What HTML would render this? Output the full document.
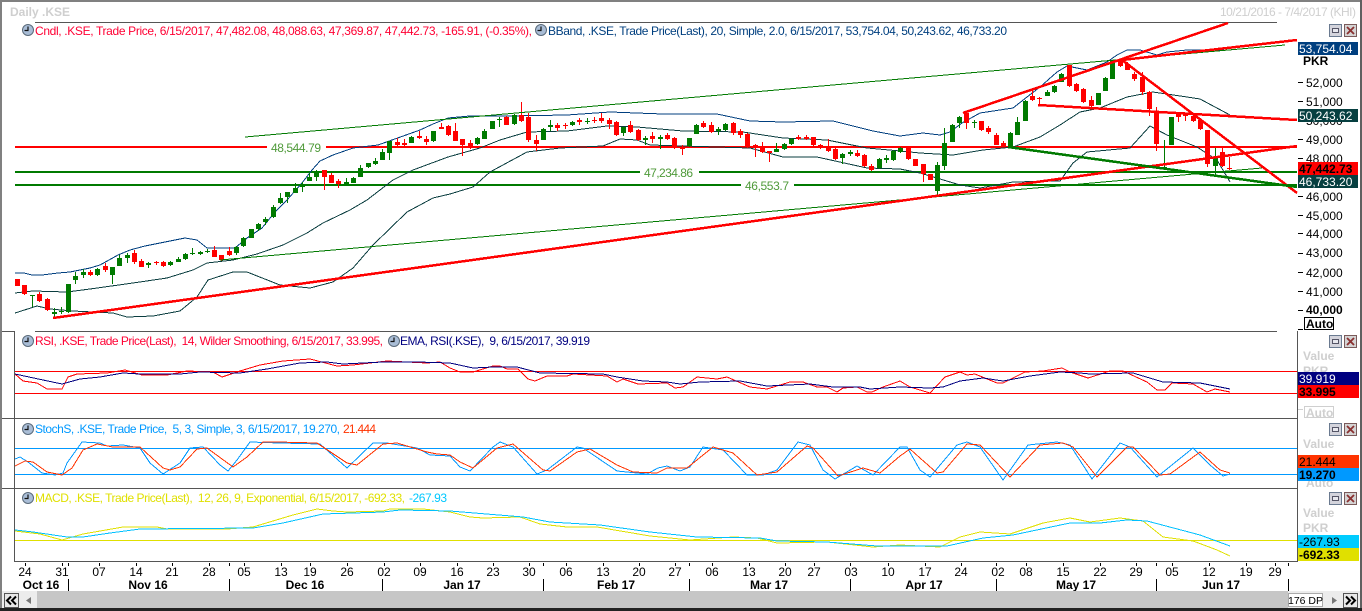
<!DOCTYPE html>
<html><head><meta charset="utf-8"><style>
html,body{margin:0;padding:0;background:#fff;width:1362px;height:611px;overflow:hidden}
svg{display:block;font-family:"Liberation Sans",sans-serif;font-size:12px}
.l{fill:none;stroke-width:1;shape-rendering:crispEdges}
.t{fill:none;shape-rendering:crispEdges}
.ax text{text-anchor:middle;fill:#000}
.mo text{text-anchor:middle;font-weight:bold;fill:#000}
.px text{fill:#000}
.gr{fill:#cfcfcf;font-weight:bold}
</style></head><body>
<svg width="1362" height="611" viewBox="0 0 1362 611" xmlns="http://www.w3.org/2000/svg">
<defs>
<g id="clk"><circle cx="6" cy="6" r="5.5" fill="#a9bdd6" stroke="#5a6a7a"/><path d="M6 2.500V6.500H2.500" fill="none" stroke="#111" stroke-width="1.200"/></g>
<g id="btn"><rect x=".5" y=".5" width="12" height="12" fill="#d4d4dc" stroke="#6a7a90"/><rect x="3.500" y="4.500" width="6" height="4" fill="#e8e8ee" stroke="#556"/>
<rect x="15.500" y=".5" width="12" height="12" fill="#d4d4d4" stroke="#7a5a5a"/><path d="M18 3L25 10M25 3L18 10" stroke="#8a3030" stroke-width="1.800"/></g>
</defs>
<rect width="1362" height="611" fill="#fff"/>
<!-- window frame -->
<rect x="0" y="0" width="1362" height="2" fill="#808080"/>
<rect x="0" y="0" width="2" height="611" fill="#808080"/>
<rect x="1360" y="0" width="2" height="611" fill="#606060"/>
<rect x="0" y="608" width="1362" height="3" fill="#222"/>

<text x="10" y="16" class="gr" font-size="12">Daily .KSE</text>
<text x="1220" y="16" fill="#cfcfcf" textLength="136">10/21/2016 - 7/4/2017 (KHI)</text>

<!-- pane lines -->
<g fill="#555">
<rect x="35" y="22" width="1242" height="1"/>
<rect x="35" y="331" width="1242" height="1"/>
<rect x="2" y="331" width="13" height="1"/>
<rect x="14" y="331" width="1" height="230"/>
<rect x="1297" y="331" width="1" height="230"/>
<rect x="2" y="418" width="1296" height="1"/>
<rect x="2" y="488" width="1296" height="1"/>
<rect x="14" y="561" width="1284" height="1"/>
</g>

<!-- horizontal levels -->
<g class="t" stroke-width="2">
<path stroke="#f00" d="M15 147H267M326 147H1297"/>
<path stroke="#007a00" d="M15 172H640M699 172H1297M15 185H741M794 185H1297"/>
</g>
<g fill="#4f9a3a">
<text x="271" y="152" textLength="50">48,544.79</text>
<text x="644" y="177" textLength="49">47,234.86</text>
<text x="745" y="190" textLength="44">46,553.7</text>
</g>

<!-- Bollinger -->
<polyline class="l" stroke="#003f7f" points="15,273 24,273 32,275 42,275 58,273 70,272 90,268 100,265 118,255 130,250 145,246 165,242 185,238 197,240 207,248 235,248 247,238 262,228 275,212 287,200 302,183 312,170 320,161 333,155 353,148 378,145 392,140 420,130 433,124 448,118 470,116 510,116 567,115 610,112 663,114 717,114 750,121 783,122 833,121 873,131 900,136 923,133 940,135 950,132 962,123 980,113 1013,108 1027,97 1040,87 1057,72 1067,66 1087,70 1107,62 1117,55 1127,50 1140,50 1157,55 1167,52 1187,50 1220,50 1230,48"/>
<polyline class="l" stroke="#0a3d3f" points="15,293 33,291 67,292 90,289 133,283 167,278 193,270 207,263 233,260 257,254 283,245 307,233 323,223 350,210 367,200 393,180 413,170 448,157 480,148 500,140 527,132 567,131 607,126 637,127 683,131 743,132 783,138 827,140 867,148 900,151 920,153 953,155 983,150 1013,147 1040,137 1060,125 1080,112 1100,108 1127,97 1153,92 1187,97 1200,99 1230,115"/>
<polyline class="l" stroke="#0a3d3f" points="15,313 37,306 50,309 73,311 113,313 127,317 153,316 180,311 197,297 208,280 233,272 247,272 280,285 310,288 333,282 353,268 373,245 407,212 433,198 450,194 473,187 490,172 527,152 560,148 603,146 620,139 637,140 650,145 750,148 783,157 817,157 867,168 900,169 920,173 960,185 980,188 1013,182 1060,181 1073,163 1087,152 1130,148 1150,126 1167,135 1197,147 1217,160 1230,182"/>

<!-- candles -->
<g transform="translate(.5,0)" class="t">
<path stroke="#f00" stroke-width="1" d="M24 285V295M39 292V302M47 298V311M90 270V276M105 263V272M134 250V264M141 259V267M156 261V265M163 261V267M214 246V257M221 255V261M229 247V256M324 170V190M331 173V183M338 179V188M397 138V146M404 139V146M419 131V139M426 136V145M441 123V129M448 125V136M455 123V132M462 139V156M470 140V149M506 116V125M521 102V122M528 113V142M536 135V151M557 123V131M565 123V129M579 118V125M594 117V123M601 113V123M609 118V129M616 121V136M630 121V133M638 129V141M652 132V143M667 133V140M674 137V149M682 145V155M703 121V128M711 122V133M733 122V135M740 129V138M747 133V148M755 144V157M762 142V153M769 151V162M798 135V140M806 135V140M813 137V146M820 144V149M828 139V152M835 148V160M857 150V157M864 154V167M871 164V171M908 148V160M915 159V166M923 164V182M930 174V180M966 113V129M981 121V131M988 126V134M996 133V145M1003 141V147M1032 90V101M1039 97V105M1069 65V87M1076 83V92M1083 88V103M1091 96V108M1120 59V67M1127 62V70M1134 72V81M1142 72V95M1149 91V116M1156 107V151M1178 113V122M1185 113V121M1193 114V122M1200 118V130M1207 130V167M1222 147V167M1229 157V170"/>
<path stroke="#007a00" stroke-width="1" d="M32 295V307M54 308V317M61 307V314M68 284V313M75 272V284M83 269V278M97 268V276M112 267V284M119 255V266M127 253V263M148 262V268M170 261V266M178 257V262M185 253V260M192 248V255M200 251V255M207 249V253M236 246V255M243 237V247M258 223V231M265 217V225M273 205V218M280 193V204M287 192V203M295 183V193M302 182V192M309 173V181M316 170V181M346 178V185M353 177V183M360 165V177M368 163V168M375 158V165M382 149V160M389 141V160M411 136V143M433 131V142M477 137V145M484 129V139M499 117V127M514 114V125M543 128V140M550 120V131M572 121V126M587 118V124M623 127V136M645 136V145M660 135V149M689 138V147M696 124V134M718 127V135M725 123V131M776 143V152M784 143V150M791 138V145M842 153V164M850 150V156M879 158V169M886 155V163M893 150V161M900 147V153M937 162V197M944 128V170M952 124V142M959 116V128M974 120V128M1010 132V147M1017 117V135M1025 100V121M1047 90V96M1054 85V93M1061 73V82M1098 93V105M1105 77V91M1112 60V79M1164 140V168M1171 117V145M1215 148V175"/>
<path stroke="#f00" stroke-width="5" d="M17 279V286M24 285V294M39 294V301M47 299V310M90 272V275M105 266V270M134 253V262M141 261V267M156 262V263M163 262V266M214 250V257M221 255V260M229 251V255M324 170V177M331 175V183M338 181V184M397 142V145M404 143V145M419 136V138M426 139V142M441 127V129M448 126V135M455 131V141M462 139V145M470 143V148M506 117V125M521 115V121M528 117V140M536 140V144M557 125V128M565 125V126M579 120V122M594 120V121M601 118V121M609 120V124M616 122V135M630 125V132M638 130V140M652 136V139M667 135V139M674 138V148M682 148V149M703 123V127M711 125V132M733 123V133M740 131V135M747 134V147M755 145V147M762 146V152M769 151V153M798 137V139M806 137V139M813 137V145M820 145V147M828 147V151M835 149V159M857 153V156M864 155V166M871 166V170M908 148V159M915 159V166M923 164V174M930 174V180M966 113V123M981 121V130M988 128V132M996 135V145M1003 143V147M1032 96V100M1039 98V99M1069 65V86M1076 84V91M1083 89V102M1091 100V106M1120 60V66M1127 64V70M1134 74V79M1142 77V92M1149 92V109M1156 111V144M1178 113V117M1185 114V116M1193 116V121M1200 120V129M1207 130V164M1222 152V166M1229 168V169"/>
<path stroke="#007a00" stroke-width="5" d="M32 295V296M54 312V314M61 311V312M68 284V312M75 276V280M83 272V275M97 269V275M112 267V275M119 258V266M127 255V258M148 263V265M170 262V265M178 259V262M185 254V259M192 253V254M200 252V254M207 251V252M236 247V253M243 238V246M251 229V238M258 224V229M265 219V222M273 207V217M280 198V203M287 192V197M295 188V193M302 184V187M309 177V181M316 172V177M346 182V185M353 178V183M360 168V177M368 163V167M375 161V164M382 152V160M389 141V153M411 137V143M433 131V141M477 138V144M484 131V139M492 121V129M499 119V120M514 115V124M543 129V140M550 125V127M572 122V125M587 121V122M623 127V133M645 138V140M660 137V139M689 138V146M696 125V134M718 129V131M725 124V130M776 149V152M784 144V149M791 139V144M842 154V158M850 152V154M879 159V168M886 158V160M893 151V160M900 148V152M937 165V191M944 143V166M952 125V142M959 117V123M974 122V123M1010 133V147M1017 122V135M1025 101V121M1047 92V96M1054 86V92M1061 74V82M1098 93V105M1105 78V91M1112 61V79M1164 167V168M1171 117V145M1215 158V166"/>
</g>

<!-- trend lines -->
<g class="t">
<path stroke="#007a00" stroke-width="1" d="M245 137L1285 45"/>
<path stroke="#007a00" stroke-width="1" d="M220 260L1262 168"/>
<path stroke="#f00" stroke-width="2.500" d="M53 318L1297 146"/>
<path stroke="#f00" stroke-width="2.500" d="M963 113L1228 23"/>
<path stroke="#f00" stroke-width="2.500" d="M1122 60L1297 40"/>
<path stroke="#f00" stroke-width="2.500" d="M1122 60L1297 193"/>
<path stroke="#f00" stroke-width="2.500" d="M1038 105L1297 120"/>
<path stroke="#007a00" stroke-width="2.500" d="M1008 147L1297 187"/>
</g>

<!-- RSI -->
<rect x="15" y="371" width="1282" height="1" fill="#f00"/>
<rect x="15" y="393" width="1282" height="1" fill="#f00"/>
<polyline class="l" stroke="#f00" points="15,374 23,381 37,383 47,389 62,389 68,377 77,374 107,373 125,370 142,375 167,375 187,371 213,372 222,377 240,371 260,365 283,361 310,359 337,366 353,365 387,361 427,363 440,362 450,368 460,372 473,372 483,369 493,366 500,366 507,369 518,369 528,379 535,381 547,376 567,376 573,374 607,376 617,382 623,379 638,384 667,383 675,388 683,387 697,377 717,379 727,377 750,387 767,389 790,382 803,382 817,387 827,387 837,392 843,388 857,387 867,392 872,392 883,387 900,381 910,387 930,393 945,377 960,372 967,375 975,374 997,383 1003,383 1025,372 1043,371 1062,368 1070,372 1088,378 1110,371 1123,371 1147,382 1157,390 1165,390 1172,383 1193,384 1207,392 1215,389 1230,392"/>
<polyline class="l" stroke="#000080" stroke-width="1.500" points="15,374 43,380 62,384 80,379 100,377 123,373 140,374 180,374 200,372 240,373 267,369 300,363 327,362 343,364 383,362 417,362 450,363 473,368 493,367 517,367 540,373 603,374 617,377 643,381 667,382 680,384 700,382 740,381 767,386 810,384 833,387 860,387 870,389 900,387 930,388 943,387 960,381 983,378 1003,381 1030,376 1060,372 1080,373 1090,374 1133,373 1163,382 1200,383 1230,389"/>

<!-- Stoch -->
<rect x="15" y="448" width="1282" height="1" fill="#0099ff"/>
<rect x="15" y="474" width="1282" height="1" fill="#0099ff"/>
<polyline class="l" stroke="#0099ff" points="15,459 20,457 28,462 42,473 55,475 63,473 67,463 82,442 100,443 107,446 123,445 140,448 150,463 163,474 180,463 190,448 203,447 220,465 228,471 237,460 250,442 280,443 320,444 347,468 373,443 387,443 417,448 430,455 450,456 460,467 470,471 493,447 500,442 513,447 537,474 547,470 577,447 583,448 617,471 647,474 658,468 667,466 680,471 690,467 703,447 723,450 747,475 763,475 777,470 798,442 810,445 823,470 835,479 857,466 873,475 900,447 907,447 920,470 930,477 957,445 967,442 980,447 1003,480 1028,445 1057,442 1070,445 1092,479 1120,443 1130,447 1157,477 1193,448 1210,465 1223,476 1230,474"/>
<polyline class="l" stroke="#ff3300" points="15,466 25,461 33,462 47,472 62,475 72,468 83,450 97,444 113,447 140,447 163,468 170,470 180,467 197,449 207,448 233,467 247,457 263,442 277,442 317,443 347,463 357,465 383,444 397,443 427,452 437,454 450,455 460,462 473,468 497,448 513,444 543,470 550,471 577,452 590,449 617,465 633,472 657,473 667,468 687,468 713,447 733,453 757,475 777,472 807,446 813,448 838,476 863,468 880,473 900,456 910,449 920,458 937,473 943,472 967,444 980,445 1010,477 1040,445 1063,443 1073,447 1097,477 1127,447 1133,447 1160,475 1170,474 1200,452 1220,470 1230,473"/>

<!-- MACD -->
<rect x="15" y="540" width="1282" height="1" fill="#e0e000"/>
<polyline class="l" stroke="#e0e000" points="15,531 40,534 62,540 83,534 123,527 157,527 167,529 227,529 253,527 293,515 317,509 333,511 347,512 383,511 390,509 423,509 450,512 470,517 483,518 520,517 540,524 567,527 597,527 650,536 690,540 733,537 757,538 777,543 827,542 873,547 900,545 940,547 960,537 980,532 1010,534 1043,523 1070,518 1090,522 1120,518 1143,521 1163,537 1193,541 1217,550 1230,556"/>
<polyline class="l" stroke="#00c0ff" points="15,530 33,532 67,537 83,537 110,533 140,529 253,528 283,523 323,514 383,512 400,510 450,511 523,517 550,522 600,525 650,532 697,537 760,538 777,541 827,542 877,546 947,546 983,538 1013,535 1070,523 1100,523 1127,520 1147,521 1200,535 1230,546"/>

<!-- legends -->
<use href="#clk" x="22" y="24"/>
<text x="35" y="35" fill="#ff0033" textLength="497">Cndl, .KSE, Trade Price, 6/15/2017, 47,482.08, 48,088.63, 47,369.87, 47,442.73, -165.91, (-0.35%),</text>
<use href="#clk" x="535" y="24"/>
<text x="548" y="35" fill="#003f7f" textLength="459">BBand, .KSE, Trade Price(Last), 20, Simple, 2.0, 6/15/2017, 53,754.04, 50,243.62, 46,733.20</text>
<use href="#clk" x="22" y="335"/>
<text x="35" y="345" fill="#ff0033" textLength="348" xml:space="preserve">RSI, .KSE, Trade Price(Last),  14, Wilder Smoothing, 6/15/2017, 33.995,</text>
<use href="#clk" x="388" y="335"/>
<text x="400" y="345" fill="#000080" textLength="190" xml:space="preserve">EMA, RSI(.KSE),  9, 6/15/2017, 39.919</text>
<use href="#clk" x="22" y="423"/>
<text x="35" y="433" fill="#0099ff" textLength="305" xml:space="preserve">StochS, .KSE, Trade Price,  5, 3, Simple, 3, 6/15/2017, 19.270,</text>
<text x="343" y="433" fill="#ff3300" textLength="33">21.444</text>
<use href="#clk" x="22" y="492"/>
<text x="35" y="502" fill="#e0e000" textLength="370" xml:space="preserve">MACD, .KSE, Trade Price(Last),  12, 26, 9, Exponential, 6/15/2017, -692.33,</text>
<text x="409" y="502" fill="#00c8ff" textLength="38">-267.93</text>

<!-- right axis -->
<use href="#btn" x="1329" y="24"/>
<use href="#btn" x="1329" y="335"/>
<use href="#btn" x="1329" y="423"/>
<use href="#btn" x="1329" y="492"/>

<g class="px">
<path stroke="#000" d="M1298 82.500H1303M1298 101.500H1303M1298 139.500H1303M1298 158.500H1303M1298 196.500H1303M1298 215.500H1303M1298 233.500H1303M1298 253.500H1303M1298 272.500H1303M1298 291.500H1303M1298 310.500H1303M1298 329.500H1303"/>
<text x="1306" y="87">52,000</text><text x="1306" y="106">51,000</text><text x="1306" y="125">50,000</text>
<text x="1306" y="144">49,000</text><text x="1306" y="163">48,000</text><text x="1306" y="201">46,000</text>
<text x="1306" y="220">45,000</text><text x="1306" y="238">44,000</text><text x="1306" y="257">43,000</text>
<text x="1306" y="277">42,000</text><text x="1306" y="296">41,000</text>
<text x="1306" y="314" font-weight="bold">40,000</text>
<text x="1303" y="65" font-weight="bold" fill="#000">PKR</text>
</g>
<rect x="1304.500" y="317.500" width="29" height="12" fill="#fff" stroke="#000"/>
<text x="1306" y="328" font-weight="bold" fill="#000">Auto</text>

<rect x="1298" y="42" width="60" height="13" fill="#003f7f"/><text x="1299" y="53" fill="#fff">53,754.04</text>
<rect x="1298" y="109" width="60" height="13" fill="#063f40"/><text x="1299" y="120" fill="#fff">50,243.62</text>
<rect x="1298" y="162" width="60" height="13" fill="#f00"/><text x="1299" y="173" fill="#000" font-weight="bold">47,442.73</text>
<rect x="1298" y="175" width="60" height="13" fill="#063f40"/><text x="1299" y="186" fill="#fff">46,733.20</text>

<text x="1303" y="360" class="gr">Value</text>
<text x="1303" y="375" class="gr">PKR</text>
<rect x="1298" y="372" width="61" height="13" fill="#000080"/><text x="1299" y="383" fill="#fff">39.919</text>
<rect x="1298" y="385" width="61" height="13" fill="#f00"/><text x="1299" y="396" fill="#000" font-weight="bold">33.995</text>
<path stroke="#cfcfcf" d="M1298 409.500H1303"/>
<rect x="1304.500" y="406.500" width="29" height="11" fill="#fff" stroke="#cfcfcf"/>
<text x="1306" y="417" class="gr">Auto</text>

<text x="1303" y="448" class="gr">Value</text>
<text x="1306" y="487" class="gr">Auto</text>
<rect x="1298" y="455" width="61" height="13" fill="#ff3300"/><text x="1299" y="466" fill="#000">21.444</text>
<rect x="1298" y="468" width="61" height="13" fill="#0099ff"/><text x="1299" y="479" fill="#000" font-weight="bold">19.270</text>

<text x="1303" y="517" class="gr">Value</text>
<text x="1303" y="532" class="gr">PKR</text>
<rect x="1298" y="535" width="61" height="13" fill="#00ccff"/><text x="1299" y="546" fill="#000">-267.93</text>
<rect x="1298" y="548" width="61" height="13" fill="#e0e000"/><text x="1299" y="559" fill="#000" font-weight="bold">-692.33</text>

<!-- x axis -->
<path class="t" stroke="#000" stroke-width="1" d="M25.500 563V566M62.500 563V566M68.500 563V566M99.500 563V566M136.500 563V566M172.500 563V566M209.500 563V566M229.500 563V566M244.500 563V566M281.500 563V566M310.500 563V566M347.500 563V566M384.500 563V566M420.500 563V566M457.500 563V566M493.500 563V566M529.500 563V566M543.500 563V566M566.500 563V566M603.500 563V566M639.500 563V566M675.500 563V566M689.500 563V566M712.500 563V566M749.500 563V566M785.500 563V566M814.500 563V566M850.500 563V566M888.500 563V566M925.500 563V566M961.500 563V566M996.500 563V566M1026.500 563V566M1063.500 563V566M1100.500 563V566M1136.500 563V566M1156.500 563V566M1172.500 563V566M1209.500 563V566M1246.500 563V566M1275.500 563V566M1288.500 563V566M68.500 579V591M229.500 579V591M382.500 579V591M543.500 579V591M689.500 579V591M850.500 579V591M996.500 579V591M1156.500 579V591M1288.500 579V591"/>
<g class="ax">
<text x="25" y="576">24</text><text x="62" y="576">31</text><text x="99" y="576">07</text><text x="136" y="576">14</text><text x="172" y="576">21</text><text x="209" y="576">28</text><text x="244" y="576">05</text><text x="281" y="576">13</text><text x="310" y="576">19</text><text x="347" y="576">26</text><text x="384" y="576">02</text><text x="420" y="576">09</text><text x="457" y="576">16</text><text x="493" y="576">23</text><text x="529" y="576">30</text><text x="566" y="576">06</text><text x="603" y="576">13</text><text x="639" y="576">20</text><text x="675" y="576">27</text><text x="712" y="576">06</text><text x="749" y="576">13</text><text x="785" y="576">20</text><text x="814" y="576">27</text><text x="851" y="576">03</text><text x="888" y="576">10</text><text x="925" y="576">17</text><text x="961" y="576">24</text><text x="998" y="576">02</text><text x="1026" y="576">08</text><text x="1063" y="576">15</text><text x="1100" y="576">22</text><text x="1136" y="576">29</text><text x="1172" y="576">05</text><text x="1209" y="576">12</text><text x="1246" y="576">19</text><text x="1275" y="576">29</text>
</g>
<g class="mo">
<text x="41" y="589">Oct 16</text><text x="148" y="589">Nov 16</text><text x="305" y="589">Dec 16</text><text x="462" y="589">Jan 17</text><text x="616" y="589">Feb 17</text><text x="769" y="589">Mar 17</text><text x="924" y="589">Apr 17</text><text x="1076" y="589">May 17</text><text x="1221" y="589">Jun 17</text>
</g>

<!-- scrollbar -->
<rect x="2" y="591" width="1358" height="17" fill="#ececec"/>
<rect x="37" y="591" width="1251" height="17" fill="#c6c6c6"/>
<rect x="4.500" y="593.500" width="14" height="14" fill="#e8e8e8" stroke="#555"/>
<path d="M11 596.500l-4 4 4 4M16 596.500l-4 4 4 4" fill="none" stroke="#000" stroke-width="2"/>
<path d="M31 597V604L26 600.500Z" fill="#777"/>
<rect x="1288.500" y="593.500" width="34" height="13" fill="#fff" stroke="#aaa"/>
<text x="1305.500" y="604" text-anchor="middle" fill="#000" font-size="10.500">176 DP</text>
<path d="M1332 597V604L1337 600.500Z" fill="#777"/>
<rect x="1343.500" y="593.500" width="14" height="14" fill="#e8e8e8" stroke="#555"/>
<path d="M1346 596.500l4 4-4 4M1351 596.500l4 4-4 4" fill="none" stroke="#000" stroke-width="2"/>
</svg>
</body></html>
